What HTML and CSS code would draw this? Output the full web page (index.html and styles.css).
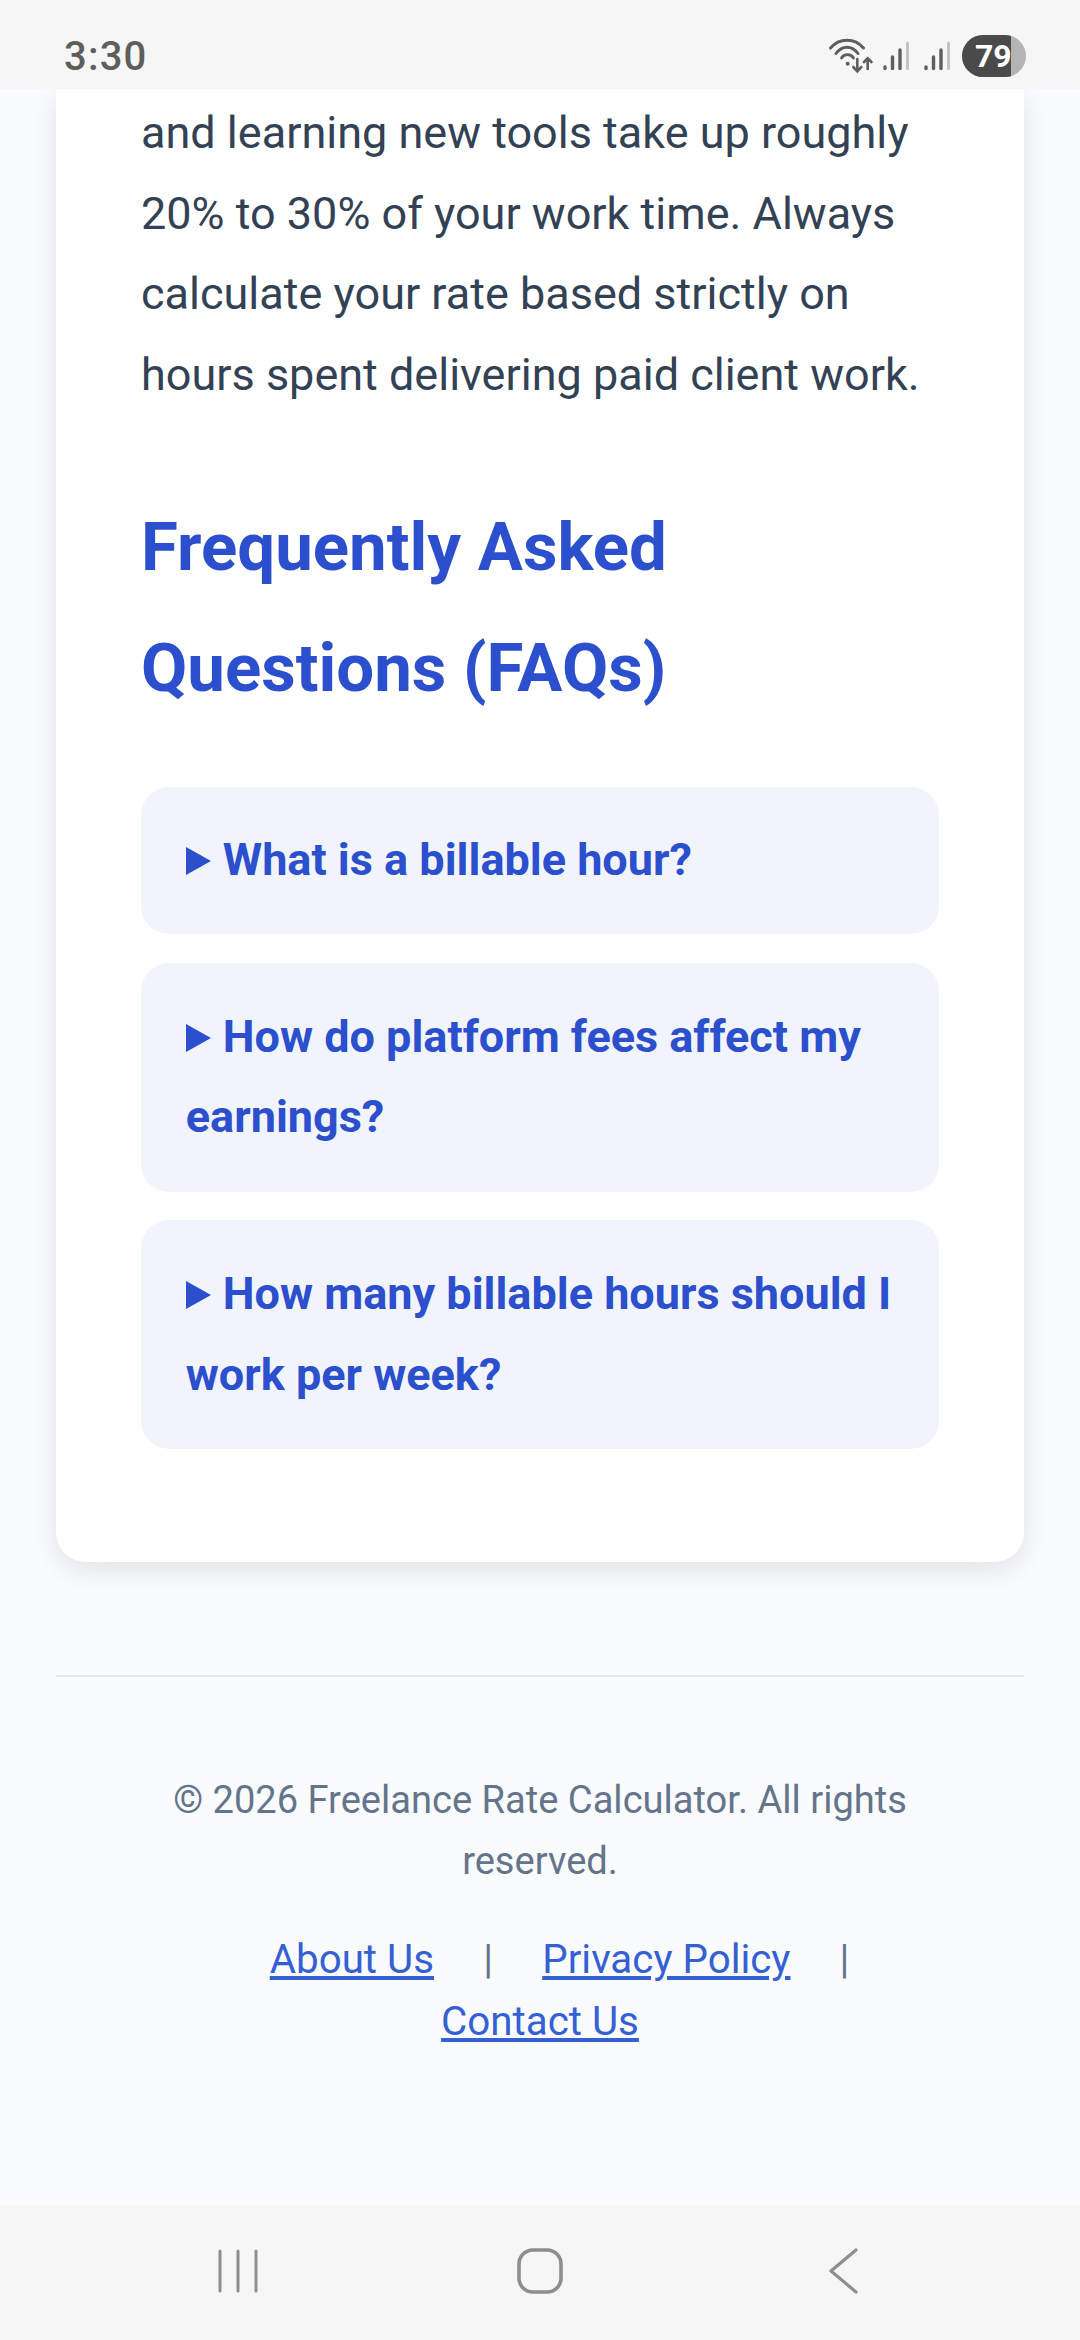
FILE: index.html
```html
<!DOCTYPE html>
<html lang="en">
<head>
<meta charset="UTF-8" />
<meta name="viewport" content="width=device-width, initial-scale=1" />
<title>Freelance Rate Calculator</title>
<link rel="stylesheet" href="styles.css">
</head>
<body>
<div class="screen">

  <div class="status-bar">
    <span class="clock">3:30</span>
    <div class="status-icons">
      <svg class="wifi" width="46" height="36" viewBox="0 0 46 36" fill="none" stroke="#5e5e5e" stroke-linecap="round">
        <path d="M2.500 10C11 -0.500 27 -0.500 35.500 10" stroke-width="3"/>
        <path d="M8 15.500C14 7 24 7 30 15.500" stroke-width="3"/>
        <path d="M13.500 20C16 15.500 23 15.500 25.500 20" stroke-width="2.800"/>
        <circle cx="19.700" cy="25.700" r="2" fill="#5e5e5e" stroke="none"/>
        <path d="M29.300 21V33M25.300 29L29.300 33.300L33.300 29" stroke-width="2.600"/>
        <path d="M39.700 31V20.500M36 24L39.700 20.300L43.400 24" stroke-width="2.600"/>
      </svg>
      <svg class="signal" width="26" height="30" viewBox="0 0 26 30" stroke-linecap="round">
        <path d="M2 26V27.500" stroke="#5e5e5e" stroke-width="3.400"/>
        <path d="M9.500 16V27.500" stroke="#5e5e5e" stroke-width="3.400"/>
        <path d="M17 9V27.500" stroke="#5e5e5e" stroke-width="3.400"/>
        <path d="M24.500 2V27.500" stroke="#c4c4c4" stroke-width="3"/>
      </svg>
      <svg class="signal" width="26" height="30" viewBox="0 0 26 30" stroke-linecap="round">
        <path d="M2 26V27.500" stroke="#5e5e5e" stroke-width="3.400"/>
        <path d="M9.500 16V27.500" stroke="#5e5e5e" stroke-width="3.400"/>
        <path d="M17 9V27.500" stroke="#5e5e5e" stroke-width="3.400"/>
        <path d="M24.500 2V27.500" stroke="#c4c4c4" stroke-width="3"/>
      </svg>
      <div class="battery"><span class="battery-level">79</span></div>
    </div>
  </div>

  <div class="page">
    <main class="card">
      <p class="body-text">and learning new tools take up roughly 20% to 30% of your work time. Always calculate your rate based strictly on hours spent delivering paid client work.</p>

      <h2>Frequently Asked Questions (FAQs)</h2>

      <details class="faq">
        <summary>What is a billable hour?</summary>
      </details>
      <details class="faq">
        <summary>How do platform fees affect my earnings?</summary>
      </details>
      <details class="faq">
        <summary>How many billable hours should I work per week?</summary>
      </details>
    </main>

    <footer class="site-footer">
      <p class="copyright">© 2026 Freelance Rate Calculator. All rights reserved.</p>
      <p class="footer-links">
        <a href="#">About Us</a>
        <span class="sep">|</span>
        <a href="#">Privacy Policy</a>
        <span class="sep">|</span>
        <a href="#">Contact Us</a>
      </p>
    </footer>
  </div>

  <div class="nav-bar">
    <svg class="nav-recent" width="44" height="46" viewBox="0 0 44 46" fill="none" stroke="#8e8e8e" stroke-width="3" stroke-linecap="round">
      <path d="M4 3V43M22 3V43M40 3V43"/>
    </svg>
    <svg class="nav-home" width="46" height="46" viewBox="0 0 46 46" fill="none" stroke="#8e8e8e" stroke-width="3.600">
      <rect x="2" y="2" width="42" height="42" rx="14"/>
    </svg>
    <svg class="nav-back" width="34" height="46" viewBox="0 0 34 46" fill="none" stroke="#8e8e8e" stroke-width="3.200" stroke-linecap="round" stroke-linejoin="round">
      <path d="M29 2L4 23L29 44"/>
    </svg>
  </div>

</div>
</body>
</html>
```

FILE: styles.css
```css
* {
  box-sizing: border-box;
}
body {
  margin: 0;
  font-family: Roboto, "Liberation Sans", sans-serif;
  background: #f9fbfd;
  color: #334155;
}
.screen {
  width: 1080px;
  height: 2340px;
  display: flex;
  flex-direction: column;
  overflow: hidden;
}
.status-bar {
  height: 89px;
  flex: none;
  background: #f6f6f6;
  display: flex;
  align-items: center;
  justify-content: space-between;
  padding: 23px 54px 0 64px;
  position: relative;
  z-index: 2;
}
.clock {
  font-size: 40px;
  font-weight: 500;
  color: #5e5e5e;
  letter-spacing: 1.2px;
}
.status-icons {
  display: flex;
  align-items: center;
}
.wifi {
  margin-right: 9px;
}
.signal {
  margin-right: 15px;
}
.signal + .signal {
  margin-right: 12px;
}
.battery {
  width: 64px;
  height: 42px;
  border-radius: 21px;
  background: #b4b4b4;
  overflow: hidden;
}
.battery-level {
  display: block;
  width: 49px;
  height: 100%;
  padding-left: 13px;
  background: #4a4a4a;
  color: #fff;
  font-size: 32px;
  font-weight: 700;
  line-height: 42px;
  white-space: nowrap;
}
.page {
  flex: 1;
  min-height: 0;
  overflow: hidden;
}
.card {
  margin: 0 56px;
  padding: 4px 85px 113px;
  background: #fff;
  border-radius: 0 0 30px 30px;
  box-shadow: 0 8px 30px rgba(0, 0, 0, 0.1);
}
.body-text {
  margin: 0;
  font-size: 45px;
  line-height: 80.640px;
  color: #334155;
}
h2 {
  margin: 71px 0 58px;
  font-size: 67.200px;
  line-height: 121px;
  font-weight: 700;
  color: #2b4fcd;
}
.faq {
  margin-top: 28.800px;
  padding: 33.600px 44.800px;
  background: #f1f4fc;
  border-radius: 28px;
}
.faq summary {
  list-style: none;
  font-size: 45px;
  line-height: 80.640px;
  font-weight: 700;
  color: #2b4fcd;
}
.faq summary::before {
  content: "";
  display: inline-block;
  margin-right: 12px;
  border-left: 25px solid #2b4fcd;
  border-top: 14.500px solid transparent;
  border-bottom: 14.500px solid transparent;
}
.site-footer {
  margin: 113px 56px 0;
  padding-top: 93.500px;
  border-top: 2px solid #e5e7eb;
  text-align: center;
}
.copyright {
  margin: 0;
  padding: 0 84px;
  font-size: 38.080px;
  line-height: 61px;
  color: #64748b;
}
.footer-links {
  margin: 37px 0 0;
  padding: 0 84px;
  font-size: 40.320px;
  line-height: 62px;
  color: #64748b;
}
.footer-links a {
  display: inline-block;
  margin: 0 39.200px;
  color: #3560d4;
}
.nav-bar {
  height: 135px;
  flex: none;
  background: #f6f6f6;
  display: flex;
  align-items: center;
  padding: 0 0 3px 216px;
}
.nav-home {
  margin-left: 257px;
}
.nav-back {
  margin-left: 264px;
}
```
